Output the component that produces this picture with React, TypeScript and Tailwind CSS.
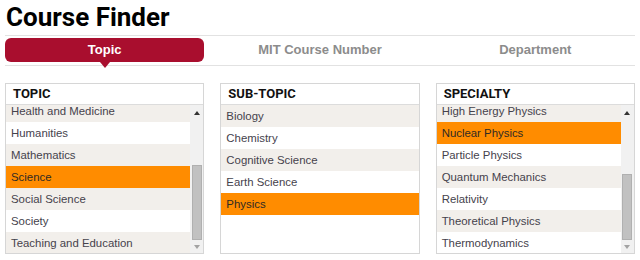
const topics = [
  'Health and Medicine',
  'Humanities',
  'Mathematics',
  'Science',
  'Social Science',
  'Society',
  'Teaching and Education',
];

const subTopics = ['Biology', 'Chemistry', 'Cognitive Science', 'Earth Science', 'Physics'];

const specialties = [
  'High Energy Physics',
  'Nuclear Physics',
  'Particle Physics',
  'Quantum Mechanics',
  'Relativity',
  'Theoretical Physics',
  'Thermodynamics',
];

const Scrollbar = ({ thumbTop, thumbHeight }: { thumbTop: string; thumbHeight: string }) => (
  <div className="w-[13px] shrink-0 flex flex-col bg-[#f1f1f1]">
    <div className="h-[15px] flex items-center justify-center">
      <div className="w-0 h-0 border-x-[3.5px] border-x-transparent border-b-[4px] border-b-[#333]" />
    </div>
    <div className="flex-1 px-[1.5px]">
      <div className={`${thumbTop} ${thumbHeight} bg-[#c1c1c1] border border-[#b0b0b0]`} />
    </div>
    <div className="h-[13px] flex items-center justify-center">
      <div className="w-0 h-0 border-x-[3.5px] border-x-transparent border-t-[4px] border-t-[#a3a3a3]" />
    </div>
  </div>
);

const Row = ({ label, bg }: { label: string; bg: string }) => (
  <div className={`${bg} h-[22px] leading-[22px] pl-[5px] text-[11.4px] whitespace-nowrap`}>
    {label}
  </div>
);

const Panel = ({ title, children }: { title: string; children: React.ReactNode }) => (
  <div className="h-[171px] border border-[#d6d6d6] flex flex-col">
    <div
      className="h-[21px] border-b border-[#dcdcdc] pl-[7px] leading-[20px] text-[13px] font-bold text-[#111]"
      style={{ fontFamily: 'Roboto, sans-serif' }}
    >
      {title}
    </div>
    <div className="flex-1 flex overflow-hidden">{children}</div>
  </div>
);

export default function App() {
  return (
    <div
      className="w-[640px] h-[260px] bg-white overflow-hidden px-[5px] text-[#45424c]"
      style={{ fontFamily: '"Liberation Sans", Arial, sans-serif' }}
    >
      <h1
        className="pt-[2px] pl-[1px] h-[32px] text-[26px] leading-[30px] font-bold text-black"
        style={{ fontFamily: 'Roboto, sans-serif' }}
      >
        Course Finder
      </h1>

      {/* Tabs */}
      <div className="mt-[3px] border-y border-[#e2e2e2] pt-[2px] pb-[3px] grid grid-cols-3 gap-4 text-[13px] font-bold">
        <div className="relative h-[24px] leading-[24px] rounded-[6px] bg-[#a90e2e] text-white text-center">
          Topic
          <div className="absolute left-1/2 -translate-x-1/2 top-[24px] w-0 h-0 border-x-[5px] border-x-transparent border-t-[6px] border-t-[#a90e2e]" />
        </div>
        <div className="h-[24px] leading-[24px] text-center text-[#8c8c8c]">MIT Course Number</div>
        <div className="h-[24px] leading-[24px] text-center text-[#8c8c8c]">Department</div>
      </div>

      {/* Lists */}
      <div className="mt-[17px] grid grid-cols-3 gap-4">
        <Panel title="TOPIC">
          <div className="flex-1 overflow-hidden">
            <div className="-mt-[5px]">
              {topics.map((t, i) => (
                <Row
                  key={t}
                  label={t}
                  bg={t === 'Science' ? 'bg-[#ff8c00] text-[#2f2a24]' : i % 2 === 0 ? 'bg-[#f2efeb]' : 'bg-white'}
                />
              ))}
            </div>
          </div>
          <Scrollbar thumbTop="mt-[45px]" thumbHeight="h-[75px]" />
        </Panel>

        <Panel title="SUB-TOPIC">
          <div className="flex-1">
            {subTopics.map((t, i) => (
              <Row
                key={t}
                label={t}
                bg={t === 'Physics' ? 'bg-[#ff8c00] text-[#2f2a24]' : i % 2 === 0 ? 'bg-[#f2efeb]' : 'bg-white'}
              />
            ))}
          </div>
        </Panel>

        <Panel title="SPECIALTY">
          <div className="flex-1 overflow-hidden">
            <div className="-mt-[5px]">
              {specialties.map((t, i) => (
                <Row
                  key={t}
                  label={t}
                  bg={
                    t === 'Nuclear Physics'
                      ? 'bg-[#ff8c00] text-[#2f2a24]'
                      : i === 0 || i % 2 === 1
                        ? 'bg-[#f2efeb]'
                        : 'bg-white'
                  }
                />
              ))}
            </div>
          </div>
          <Scrollbar thumbTop="mt-[54px]" thumbHeight="h-[66px]" />
        </Panel>
      </div>
    </div>
  );
}
